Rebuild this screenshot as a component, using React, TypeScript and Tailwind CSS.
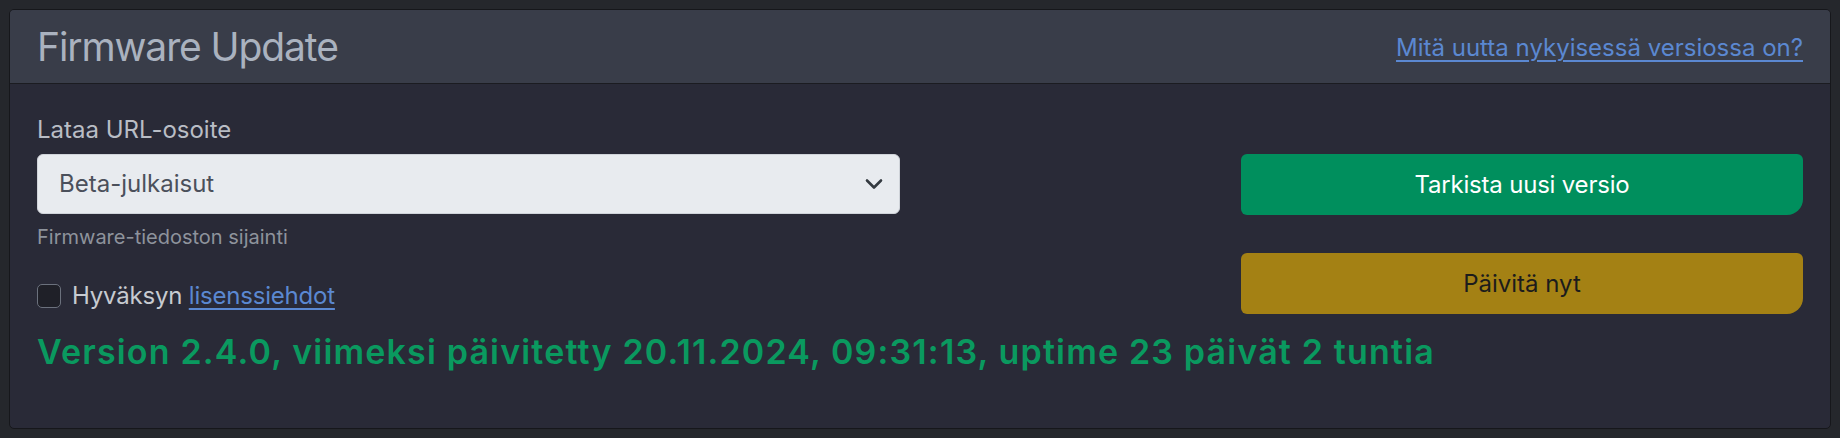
import React from "react";

export default function App() {
  return (
    <div
      className="min-h-screen w-full bg-[#25272c] p-[9px]"
      style={{ fontFamily: "Inter, 'Noto Sans', sans-serif" }}
    >
      <div className="h-[420px] overflow-hidden rounded-[5px] border border-[#16171b] bg-[#292a37]">
        <div className="flex h-[74px] items-center justify-between border-b border-[#1b1c21] bg-[#393d49] px-[27px]">
          <h1 className="text-[39px] leading-[48px] font-normal tracking-[-1.1px] text-[#aab2bf]">Firmware Update</h1>
          <a href="#" className="mt-[3px] text-[24px] leading-[36px] text-[#5b88d1] underline underline-offset-[4px] decoration-[1.5px]">
            Mitä uutta nykyisessä versiossa on?
          </a>
        </div>
        <div className="px-[27px] pt-[28px]">
          <div className="flex justify-between">
            <div className="w-[863px]">
              <label className="block text-[24px] leading-[36px] text-[#b9bdc5]">Lataa URL-osoite</label>
              <div className="mt-[6px] flex h-[60px] items-center justify-between rounded-[6px] border border-[#cfd3d9] bg-[#e8ebef] pl-[21px] pr-[16px]">
                <span className="text-[24px] text-[#4b505b]">Beta-julkaisut</span>
                <svg width="18" height="12" viewBox="0 0 18 12" fill="none">
                  <path d="M2 2.5 L9 9.5 L16 2.5" stroke="#343a40" strokeWidth="2.6" strokeLinecap="round" strokeLinejoin="round" />
                </svg>
              </div>
              <div className="mt-[8px] text-[20px] leading-[31px] text-[#8e939c]">Firmware-tiedoston sijainti</div>
              <div className="mt-[25px] flex h-[36px] items-center">
                <span className="h-[24px] w-[24px] rounded-[5px] border-[1.5px] border-[#6b717d] bg-[#1f2028]" />
                <span className="ml-[11px] text-[24px] leading-[36px] tracking-[-0.2px] text-[#c7cbd1]">
                  Hyväksyn{" "}
                  <a href="#" className="text-[#5b88d1] underline underline-offset-[4px] decoration-[1.5px]">lisenssiehdot</a>
                </span>
              </div>
            </div>
            <div className="mt-[42px] flex w-[562px] flex-col gap-[38px]">
              <button className="flex h-[61px] items-center justify-center rounded-[6px] rounded-br-[16px] bg-[#008f5d] text-[24px] tracking-[-0.2px] text-white">
                Tarkista uusi versio
              </button>
              <button className="flex h-[61px] items-center justify-center rounded-[6px] rounded-br-[16px] bg-[#a48114] text-[24px] text-[#1c1c1c]">
                Päivitä nyt
              </button>
            </div>
          </div>
          <div className="mt-[14px] whitespace-nowrap text-[34px] leading-[48px] font-semibold tracking-[1.17px] text-[#0a995f]">
            Version 2.4.0, viimeksi päivitetty 20.11.2024, 09:31:13, uptime 23 päivät 2 tuntia
          </div>
        </div>
      </div>
    </div>
  );
}
